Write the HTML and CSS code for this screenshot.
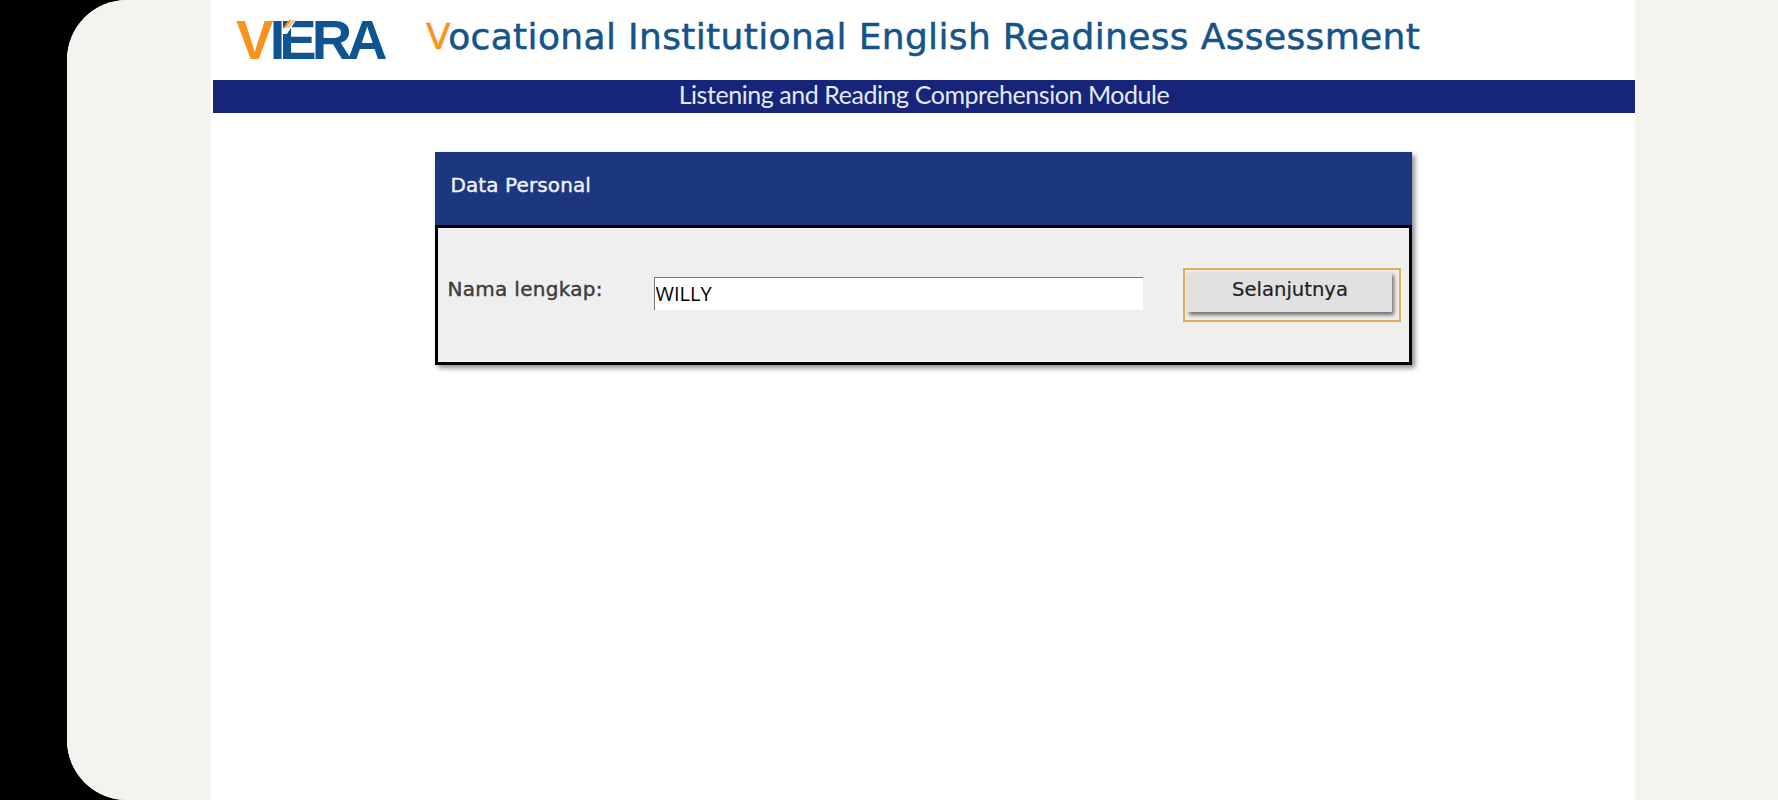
FILE: index.html
```html
<!DOCTYPE html>
<html lang="id">
<head>
<meta charset="utf-8">
<title>VIERA</title>
<link rel="stylesheet" href="styles.css">
</head>
<body>
<div class="bezel"></div>
<div class="screen">
  <div class="gutter gutter-left"></div>
  <main class="page">
    <header class="masthead">
      <div class="logo">
        <span class="logo-v">V</span><span class="logo-i">I</span><span class="logo-rest">ERA</span>
        <svg class="logo-mark" viewBox="0 0 30 20" width="30" height="20" aria-hidden="true">
          <path d="M8 9 L14 0 L21 0 L12 14 L8 14 Z" fill="#fff"/>
          <path d="M8 8 L14 0 L17 0 L11 8 Z" fill="#f7931e"/>
          <path d="M12 8 L18 0 L20 0 L14 8 Z" fill="#f7b55e"/>
        </svg>
      </div>
      <h1 class="title"><span class="title-v">V</span>ocational Institutional English Readiness Assessment</h1>
    </header>
    <div class="module-bar">Listening and Reading Comprehension Module</div>
    <section class="panel">
      <h2 class="panel-head">Data Personal</h2>
      <div class="panel-body">
        <label class="field-label" for="nama">Nama lengkap:</label>
        <input class="field-input" id="nama" type="text" value="WILLY">
        <div class="button-focus"><button class="next-button" type="button">Selanjutnya</button></div>
      </div>
    </section>
  </main>
  <div class="gutter gutter-right"></div>
</div>
</body>
</html>
```
FILE: styles.css
```css
* { box-sizing: border-box; }
html, body { margin: 0; height: 800px; overflow: hidden; }
body { display: flex; background: #000; font-family: "DejaVu Sans", sans-serif; }
.bezel { width: 67px; flex: none; background: #000; }
.screen { flex: 1; display: flex; height: 800px; background: #f4f3ef; border-radius: 60px 0 0 60px; overflow: hidden; }
.gutter { flex: none; background: #f4f3ef; }
.gutter-left { width: 144px; }
.gutter-right { width: 143px; }
.page { flex: 1; background: #fff; display: flex; flex-direction: column; }
.masthead { height: 80px; display: flex; align-items: flex-start; padding: 0 0 0 25px; }
.logo { position: relative; width: 190px; flex: none; margin-top: 10px; font-family: "Liberation Sans", sans-serif; font-weight: 700; font-size: 56px; line-height: 60px; white-space: nowrap; }
.logo-v { color: #f7931e; letter-spacing: -3.6px; }
.logo-i { color: #0f5390; letter-spacing: -6px; }
.logo-rest { color: #0f5390; letter-spacing: -5px; }
.logo-mark { position: absolute; left: 39px; top: 10px; }
.title { margin: 14px 0 0; font-size: 36px; line-height: 46px; font-weight: 400; letter-spacing: .35px; color: #14548a; white-space: nowrap; -webkit-text-stroke: .5px #14548a; }
.title-v { color: #f7931e; -webkit-text-stroke: .5px #f7931e; }
.module-bar { height: 33px; margin-left: 2px; background: #16257a; color: #e6e9f6; font-family: "Lato", sans-serif; font-size: 25px; letter-spacing: -.44px; line-height: 29px; text-align: center; }
.panel { width: 977px; margin: 39px auto 0; box-shadow: 3px 3px 5px rgba(0,0,0,.45); }
.panel-head { margin: 0; height: 73px; padding-left: 16px; background: #1c367f; color: #f0f2f8; font-size: 20px; letter-spacing: .1px; font-weight: 400; line-height: 66px; -webkit-text-stroke: .4px #f0f2f8; }
.panel-body { height: 140px; background: #efefef; border: 3px solid #000; display: flex; align-items: flex-start; padding-left: 10px; }
.field-label { width: 206px; flex: none; margin-top: 47px; font-size: 20px; letter-spacing: .3px; line-height: 28px; color: #3c3c3c; -webkit-text-stroke: .4px #3c3c3c; }
.field-input { width: 489px; height: 33px; flex: none; margin-top: 49px; padding: 0 0 1px 1px; border: 0; border-top: 1px solid #777; border-left: 1px solid #777; background: #fff; color: #000; font-family: "Open Sans", sans-serif; font-size: 20px; outline: none; }
.button-focus { width: 218px; height: 54px; flex: none; margin: 40px 0 0 40px; padding: 2px 7px 8px 2px; border: 2px solid #e0ae5a; }
.next-button { display: block; width: 100%; height: 100%; padding: 0 0 6px 2px; border: 0; background: #e1e1e1; color: #222; font-family: "DejaVu Sans", sans-serif; font-size: 19.6px; box-shadow: 2px 3px 4px rgba(0,0,0,.55); -webkit-text-stroke: .2px #222; }
```
